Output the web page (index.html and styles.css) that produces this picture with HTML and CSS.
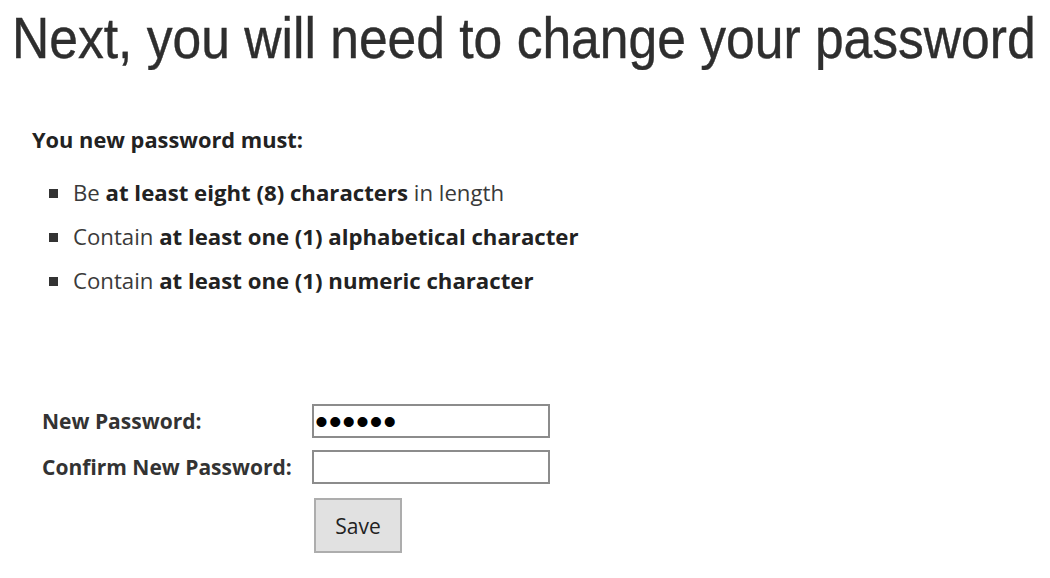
FILE: index.html
```html
<!DOCTYPE html>
<html lang="en">
<head>
    <meta charset="UTF-8">
    <title>Change password</title>
    <link rel="stylesheet" href="styles.css">
</head>
<body>
    <h1 class="page-title"><span>Next, you will need to change your password</span></h1>

    <div class="rules">
        <p class="rules-head">You new password must:</p>
        <ul class="rules-list">
            <li>Be <b>at least eight (8) characters</b> in length</li>
            <li>Contain <b>at least one (1) alphabetical character</b></li>
            <li>Contain <b>at least one (1) numeric character</b></li>
        </ul>
    </div>

    <form class="pw-form">
        <label for="newPw">New Password:</label>
        <input type="password" id="newPw" value="abcdef">
        <label for="confirmPw">Confirm New Password:</label>
        <input type="password" id="confirmPw">
        <span></span>
        <div><button type="button">Save</button></div>
    </form>
</body>
</html>
```

FILE: styles.css
```css
body {
    margin: 0;
    padding: 0 12px;
    background-color: #fff;
    color: #333;
    font-family: 'Open Sans', 'Noto Sans', sans-serif;
}

.page-title {
    margin: 6px 0 0 0;
    font-family: 'Liberation Sans', Arial, sans-serif;
    font-weight: normal;
    font-size: 57px;
    line-height: 64px;
    color: #2e2e2e;
    white-space: nowrap;
    overflow: hidden;
}

.page-title span {
    display: inline-block;
    transform: scaleX(0.905);
    transform-origin: left center;
    -webkit-text-stroke: 0.4px #2e2e2e;
}

.rules {
    margin-top: 55px;
    padding-left: 20px;
}

.rules-head {
    margin: 0;
    font-size: 21.8px;
    line-height: 30px;
    font-weight: bold;
    color: #222;
}

.rules-list {
    list-style: none;
    margin: 16px 0 0 0;
    padding: 0;
}

.rules-list li {
    position: relative;
    padding-left: 41px;
    font-size: 22.2px;
    line-height: 44px;
    color: #3a3a3a;
}

.rules-list li::before {
    content: '';
    position: absolute;
    left: 17px;
    top: 18px;
    width: 9px;
    height: 9px;
    background-color: #333;
}

.rules-list b {
    color: #222;
}

.pw-form {
    display: grid;
    grid-template-columns: 270px 238px;
    row-gap: 12px;
    align-items: center;
    margin-top: 101px;
    padding-left: 30px;
}

.pw-form label {
    font-size: 21px;
    font-weight: bold;
    color: #333;
}

.pw-form input {
    box-sizing: border-box;
    width: 238px;
    height: 34px;
    margin: 0;
    padding: 2px 1px 0 1px;
    border: 2px solid #8c8c8c;
    font-size: 37px;
    letter-spacing: 0.7px;
    color: #000;
    outline: none;
}

.pw-form button {
    box-sizing: border-box;
    margin: 2px 0 0 2px;
    width: 88px;
    height: 55px;
    border: 2px solid #adadad;
    background-color: #e1e1e1;
    font-family: 'Open Sans', 'Noto Sans', sans-serif;
    font-size: 21px;
    color: #222;
}
```
